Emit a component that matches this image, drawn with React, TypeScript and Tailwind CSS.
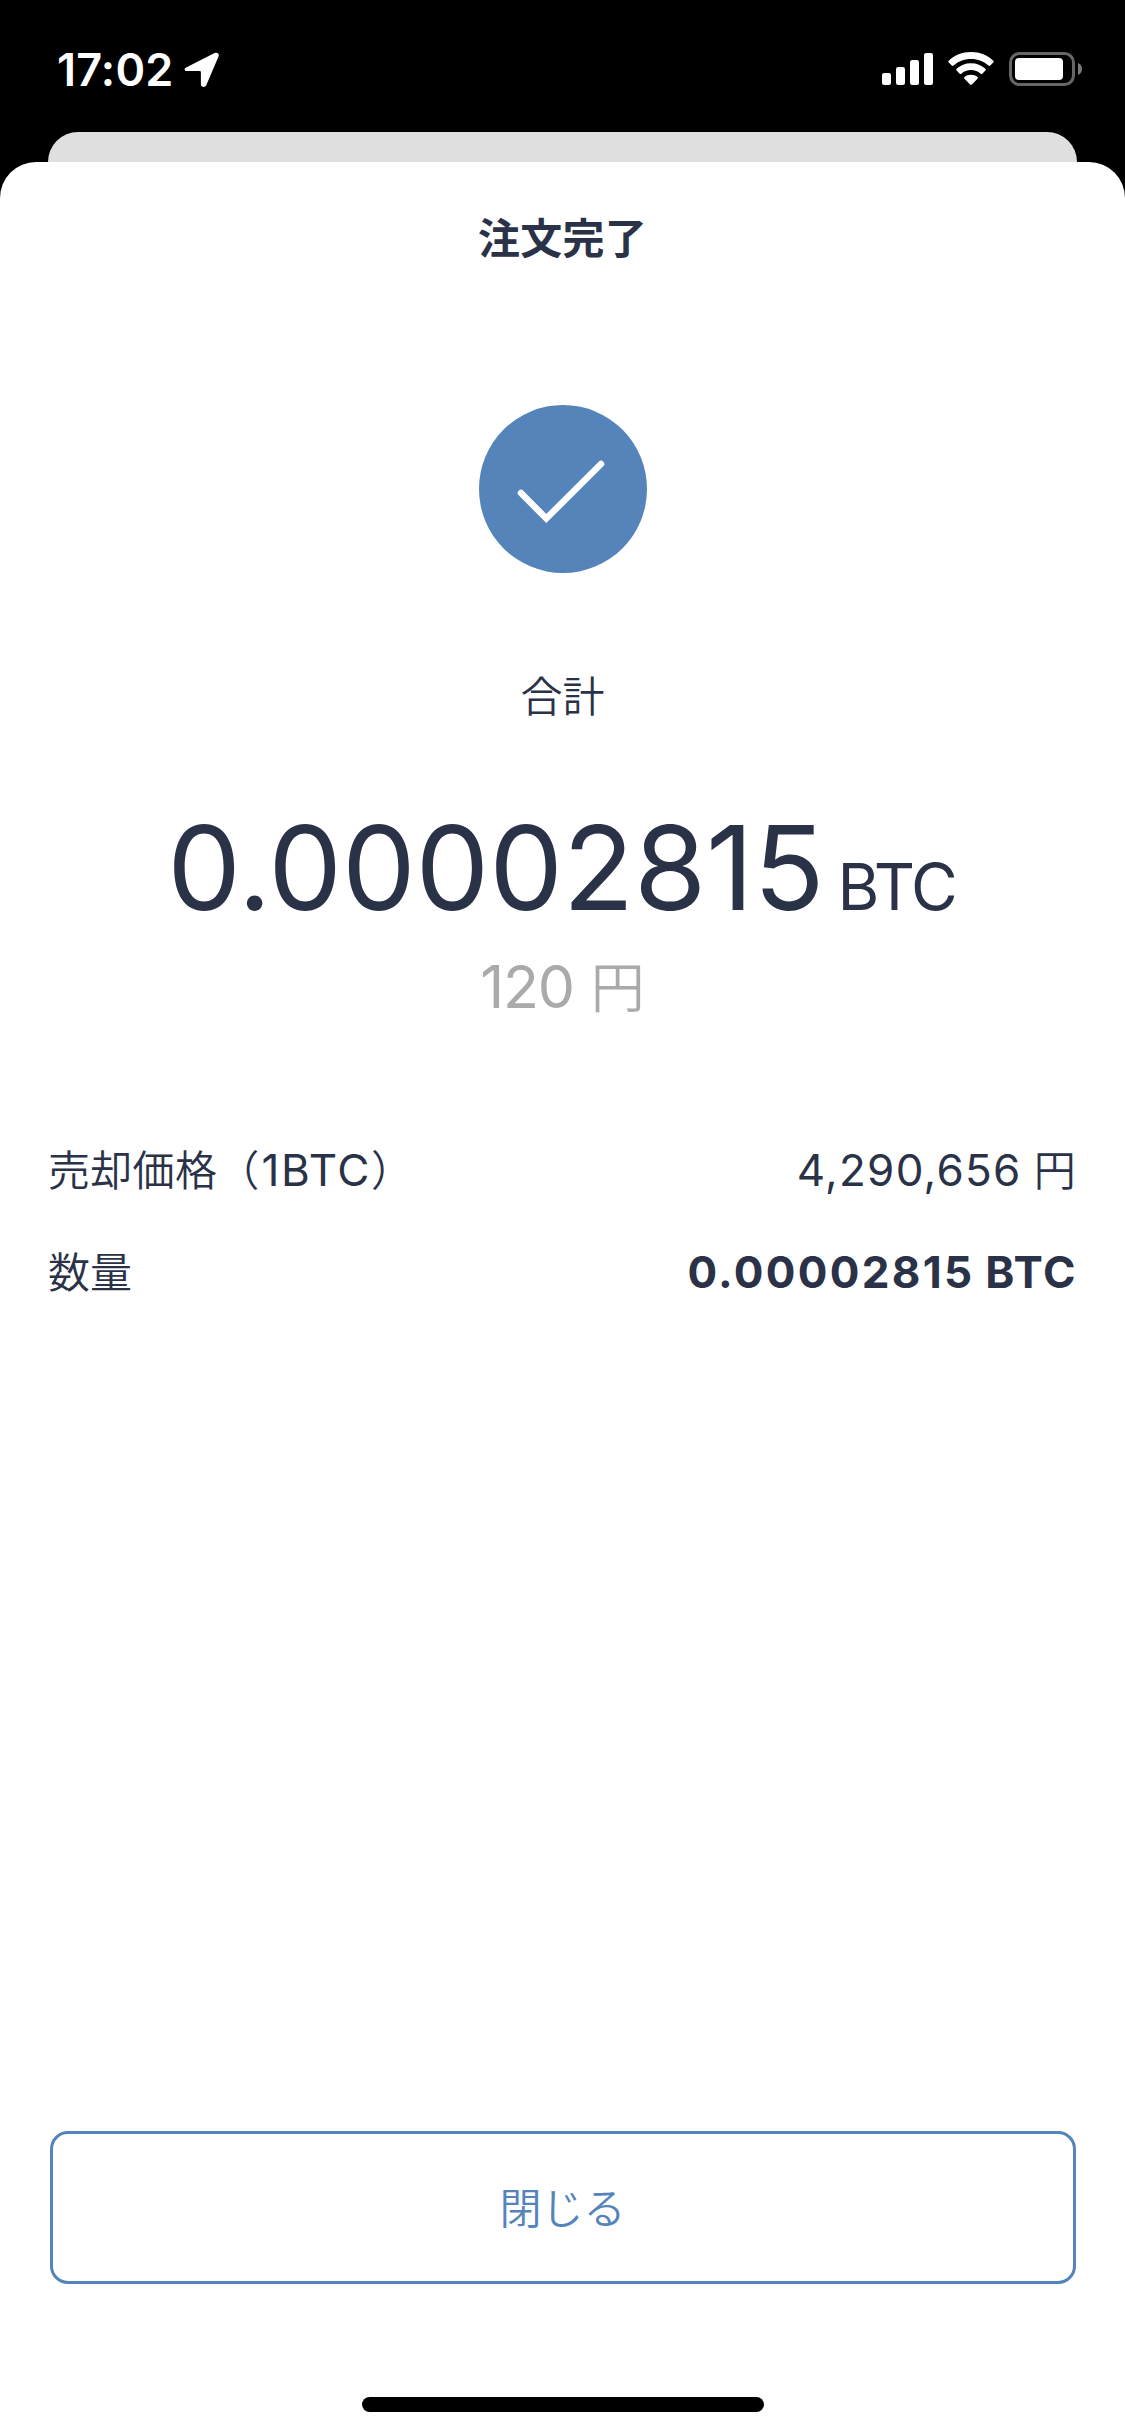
import clsx from "clsx";

const details = [
    {
        label: (
            <>
                <span className="font-[350] tracking-[0.3px]">売却価格（</span>
                <span className="ml-[2px] text-[44px] tracking-[1.5px]">1BTC</span>
                <span className="font-[350]">）</span>
            </>
        ),
        value: "4,290,656",
        unit: "円",
        strong: false,
    },
    {
        label: <span className="font-[350]">数量</span>,
        value: "0.00002815",
        unit: "BTC",
        strong: true,
    },
];

function StatusBar() {
    return (
        <header className="flex h-[132px] shrink-0 items-start justify-between pt-[51px] pl-[57px] pr-[43px] text-white">
            <div className="flex items-center gap-[10px]">
                <span className="h-[38px] text-[45px] leading-[38px] font-semibold tracking-[0.2px]">17:02</span>
                {/* Location arrow */}
                <svg width="36" height="36" viewBox="0 0 36 36" fill="currentColor">
                    <path d="M2.6 15.2 30.6 1.1C33.2-.2 35.6 1.6 34.6 4.3L22.4 33C21.1 36 16.9 35.4 16.9 32.2V20.2Q16.9 19.1 15.8 19.1H3.7C.2 19.1-.6 16.8 2.6 15.2Z" />
                </svg>
            </div>
            <div className="flex items-start pt-[1px]">
                {/* Signal */}
                <svg width="51" height="32" viewBox="0 0 51 32" fill="currentColor" className="mt-[1px]">
                    <rect x="0" y="20" width="9" height="12" rx="2.2" />
                    <rect x="14" y="14" width="9" height="18" rx="2.2" />
                    <rect x="28" y="7" width="9" height="25" rx="2.2" />
                    <rect x="42" y="0" width="9" height="32" rx="2.2" />
                </svg>
                {/* Wi-Fi */}
                <svg width="46" height="33" viewBox="0 0 46 33" fill="currentColor" className="ml-[15px]">
                    <path d="M23 0C31.8 0 39.6 3.3 45.3 8.7Q46.2 9.5 45.3 10.4L42.2 13.6Q41.4 14.4 40.5 13.6C36 9.5 29.9 7 23 7S10 9.5 5.5 13.6Q4.6 14.4 3.8 13.6L.7 10.4Q-.2 9.5.7 8.7C6.4 3.3 14.2 0 23 0Z" />
                    <path d="M23 11.3C28.7 11.3 33.5 13.3 37.4 16.8Q38.3 17.6 37.4 18.5L34.3 21.7Q33.5 22.5 32.6 21.7C30 19.4 26.8 18.1 23 18.1S16 19.4 13.4 21.7Q12.5 22.5 11.7 21.7L8.6 18.5Q7.7 17.6 8.6 16.8C12.5 13.3 17.3 11.3 23 11.3Z" />
                    <path d="M23 22.8C25.6 22.8 27.8 23.6 29.5 25Q30.4 25.8 29.5 26.7L23.9 32.4Q23 33.2 22.1 32.4L16.5 26.7Q15.6 25.8 16.5 25C18.2 23.6 20.4 22.8 23 22.8Z" />
                </svg>
                {/* Battery */}
                <svg width="73" height="34" viewBox="0 0 73 34" className="ml-[15px]">
                    <rect x="1.5" y="1.5" width="63" height="31" rx="9" fill="none" stroke="#666" strokeWidth="3" />
                    <rect x="6" y="6" width="48" height="22" rx="4" fill="#fff" />
                    <path d="M69 11C71.5 12 73 14.3 73 17S71.5 22 69 23Z" fill="#7a7a7a" />
                </svg>
            </div>
        </header>
    );
}

export default function App() {
    return (
        <div className="flex h-[2436px] w-[1125px] flex-col overflow-hidden bg-black font-['Inter','Noto_Sans_CJK_JP',sans-serif] text-[#2a3248]">
            <StatusBar />

            {/* Edge of the screen behind the sheet */}
            <div className="mx-[48px] h-[30px] shrink-0 rounded-t-[30px] bg-[#dfdfdf]" />

            <main className="flex flex-1 flex-col items-center rounded-t-[36px] bg-white">
                <h1 className="mt-[47px] h-[60px] text-[42px] leading-[60px] font-bold tracking-[0.2px]">注文完了</h1>

                {/* Check */}
                <svg width="168" height="168" viewBox="0 0 168 168" className="mt-[136px]">
                    <circle cx="84" cy="84" r="84" fill="#5484ba" />
                    <path d="M42 88 67.3 113.5 122 59" fill="none" stroke="#fff" strokeWidth="6.5" strokeLinecap="round" />
                </svg>

                <p className="mt-[94px] h-[60px] text-[42px] leading-[60px] font-[350]">合計</p>

                <p className="mt-[71px] flex h-[140px] items-baseline gap-[13px] leading-[140px]">
                    <span className="text-[117px] tracking-[-0.2px]">0.00002815</span>
                    <span className="mr-[2px] text-[64px] tracking-[-2px]">BTC</span>
                </p>
                <p className="mt-[9px] flex h-[80px] items-baseline gap-[17px] leading-[80px] text-[#aaa]">
                    <span className="text-[59px] tracking-[-1.2px]">120</span>
                    <span className="text-[54px] font-[350]">円</span>
                </p>

                <dl className="mt-[113px] flex w-full flex-col gap-[42px] px-[48px]">
                    {details.map((row, idx) => (
                        <div key={idx} className="flex h-[60px] items-baseline justify-between text-[42px] leading-[60px]">
                            <dt>{row.label}</dt>
                            <dd className={clsx("flex items-baseline text-[44px]", row.strong ? "gap-[11px] font-bold" : "gap-[12px] tracking-[1.3px]")}>
                                <span className={clsx(row.strong && "tracking-[2.3px]")}>{row.value}</span>
                                <span className={clsx(row.strong ? "tracking-[1.5px]" : "text-[42px] font-[350]")}>{row.unit}</span>
                            </dd>
                        </div>
                    ))}
                </dl>

                <button className="mt-auto mb-[113px] h-[153px] w-[1026px] rounded-[18px] border-[3px] border-[#5484ba] pt-[2px] text-[42px] font-[350] text-[#5484ba]">閉じる</button>

                {/* Home indicator */}
                <div className="mb-[24px] h-[15px] w-[402px] rounded-full bg-black" />
            </main>
        </div>
    );
}
